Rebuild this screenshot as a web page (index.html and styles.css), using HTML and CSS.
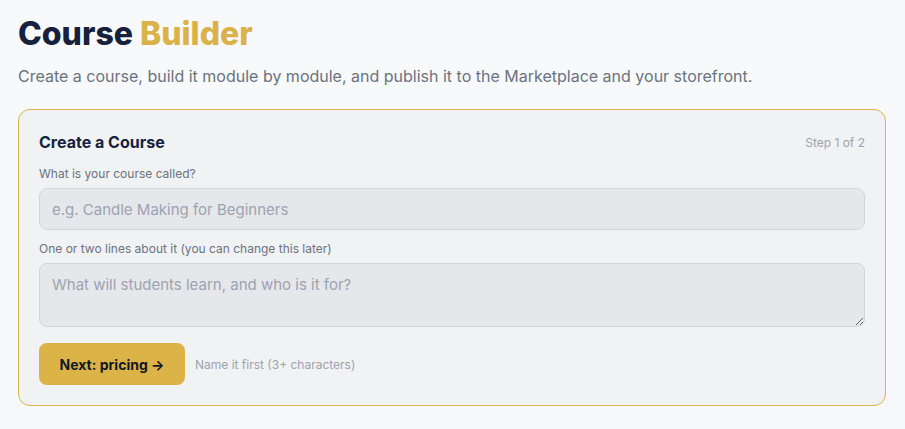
FILE: index.html
```html
<!DOCTYPE html>
<html lang="en">
<head>
<meta charset="utf-8">
<title>Course Builder</title>
<link rel="stylesheet" href="styles.css">
</head>
<body>
<main class="page">
  <h1 class="title">Course <span class="accent">Builder</span></h1>
  <p class="subtitle">Create a course, build it module by module, and publish it to the Marketplace and your storefront.</p>
  <section class="card">
    <div class="card-head">
      <h2 class="card-title">Create a Course</h2>
      <span class="step">Step 1 of 2</span>
    </div>
    <label class="label" for="name">What is your course called?</label>
    <input class="field" id="name" type="text" placeholder="e.g. Candle Making for Beginners">
    <label class="label label-2" for="about">One or two lines about it (you can change this later)</label>
    <textarea class="field area" id="about" placeholder="What will students learn, and who is it for?"></textarea>
    <div class="actions">
      <button class="btn" type="button">Next: pricing →</button>
      <span class="hint">Name it first (3+ characters)</span>
    </div>
  </section>
</main>
</body>
</html>
```

FILE: styles.css
```css
* { box-sizing: border-box; }
html, body { margin: 0; padding: 0; }
body {
  background: #f8f9fa;
  font-family: Inter, "Noto Sans", "Liberation Sans", sans-serif;
  color: #1f2937;
}
.page {
  padding: 14px 19px 20px 18px;
}
.title {
  margin: 0;
  font-size: 32px;
  line-height: 40px;
  font-weight: 800;
  color: #16223d;
}
.accent { color: #d9b34a; }
.subtitle {
  margin: 10px 0 0;
  font-size: 16px;
  line-height: 24px;
  color: #6b7280;
}
.card {
  margin-top: 21px;
  background: #f1f2f4;
  border: 1px solid #d9b44c;
  border-radius: 12px;
  padding: 20px;
  display: flex;
  flex-direction: column;
}
.card-head {
  display: flex;
  justify-content: space-between;
  align-items: center;
}
.card-title {
  margin: 0;
  font-size: 16px;
  line-height: 24px;
  font-weight: 700;
  color: #16223d;
}
.step {
  font-size: 12px;
  color: #9ca3af;
}
.label {
  margin-top: 12px;
  font-size: 12px;
  line-height: 16px;
  color: #6b7280;
}
.label-2 { margin-top: 11px; }
.field {
  margin-top: 6px;
  width: 100%;
  height: 42px;
  background: #e5e7eb;
  border: 1px solid #d1d5db;
  border-radius: 8px;
  padding: 0 12px;
  font-family: inherit;
  font-size: 15px;
  color: #1f2937;
  outline: none;
}
.field::placeholder { color: #9ca3af; }
.area {
  height: 64px;
  padding: 10px 12px;
  line-height: 22px;
  resize: vertical;
  display: block;
}
.actions {
  margin-top: 16px;
  display: flex;
  align-items: center;
  gap: 10px;
}
.btn {
  height: 42px;
  min-width: 146px;
  padding: 0 20px;
  border: none;
  border-radius: 8px;
  background: #dbb347;
  color: #111827;
  font-family: inherit;
  font-size: 14px;
  font-weight: 700;
  cursor: pointer;
}
.hint {
  font-size: 12px;
  color: #9ca3af;
}
```
